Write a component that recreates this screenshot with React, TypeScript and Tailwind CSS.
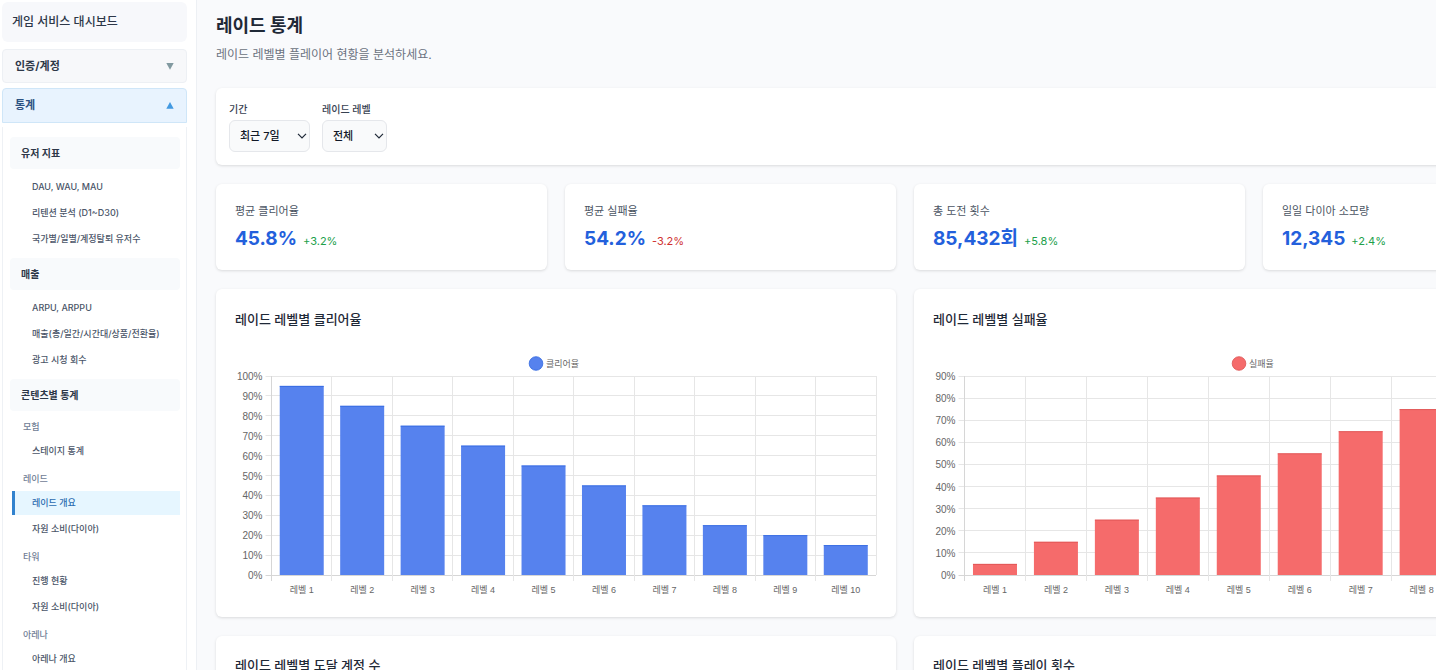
import { useState } from "react";
import clsx from "clsx";

type Item = { label: string; heading?: boolean; active?: boolean };
type Group = { title: string; items: Item[] };

const groups: Group[] = [
  {
    title: "유저 지표",
    items: [
      { label: "DAU, WAU, MAU" },
      { label: "리텐션 분석 (D1~D30)" },
      { label: "국가별/일별/계정탈퇴 유저수" },
    ],
  },
  {
    title: "매출",
    items: [
      { label: "ARPU, ARPPU" },
      { label: "매출(총/일간/시간대/상품/전환율)" },
      { label: "광고 시청 회수" },
    ],
  },
  {
    title: "콘텐츠별 통계",
    items: [
      { label: "모험", heading: true },
      { label: "스테이지 통계" },
      { label: "레이드", heading: true },
      { label: "레이드 개요", active: true },
      { label: "자원 소비(다이아)" },
      { label: "타워", heading: true },
      { label: "진행 현황" },
      { label: "자원 소비(다이아)" },
      { label: "아레나", heading: true },
      { label: "아레나 개요" },
    ],
  },
];

function Sidebar() {
  const [open, setOpen] = useState(true);
  return (
    <aside className="h-screen w-[197px] shrink-0 overflow-y-auto border-r border-[#edf0f4] bg-white py-[2px] pr-[9px] pl-[2px] [scrollbar-width:none]">
      <div className="flex h-10 items-center rounded-md bg-[#f7f8fb] px-[10px] text-[12px] font-medium text-[#2d3748]">
        게임 서비스 대시보드
      </div>
      <button
        type="button"
        className="mt-[7px] flex h-[34px] w-full items-center justify-between rounded border border-[#edf0f4] bg-[#f7f8fa] px-3 text-[11px] font-bold text-[#2d3748]"
      >
        인증/계정
        <svg className="h-[7px] w-[8px]" viewBox="0 0 8 7" aria-hidden="true">
          <path d="M0.3 0H7.7L4 6.8Z" fill="#829aa0" />
        </svg>
      </button>
      <button
        type="button"
        aria-expanded={open}
        onClick={() => setOpen(!open)}
        className="mt-[5px] flex h-[35px] w-full items-center justify-between rounded-t border border-[#cfe6f8] bg-[#e8f3fe] px-3 text-[11px] font-bold text-[#2c5282]"
      >
        통계
        <svg className="h-[7px] w-[8px]" viewBox="0 0 8 7" aria-hidden="true">
          <path d="M0.3 6.8H7.7L4 0Z" fill="#4299e1" />
        </svg>
      </button>
      {open && (
        <nav className="mt-1 flex flex-col gap-[7px] border-x border-[#eef1f5] px-[6px] pt-[10px] pb-4 pl-[7px]">
          {groups.map((g) => (
            <section key={g.title}>
              <h3 className="flex h-8 items-center rounded bg-[#f8fafc] px-[11px] text-[10px] font-bold text-[#2d3748]">
                {g.title}
              </h3>
              <ul className={clsx("flex flex-col gap-[2px] pl-[2px]", g.items[0].heading ? "pt-[2px]" : "pt-[6px]")}>
                {g.items.map((it, i) => (
                  <li key={i}>
                    {it.heading ? (
                      <div className="h-6 pt-1 pl-[11px] text-[9px] leading-5 font-medium text-[#718096]">
                        {it.label}
                      </div>
                    ) : (
                      <a
                        href="#"
                        className={clsx(
                          "block h-6 border-l-3 pl-[17px] text-[9px] leading-6 font-medium whitespace-nowrap",
                          it.active
                            ? "border-[#3182ce] bg-[#e6f6ff] text-[#2b6cb0]"
                            : "border-transparent text-[#4a5568]",
                        )}
                      >
                        {it.label}
                      </a>
                    )}
                  </li>
                ))}
              </ul>
            </section>
          ))}
        </nav>
      )}
    </aside>
  );
}

function Filter({ id, label, options }: { id: string; label: string; options: string[] }) {
  return (
    <div className="flex flex-col items-start gap-[3px]">
      <label htmlFor={id} className="text-[10px] leading-4 font-medium text-[#374151]">
        {label}
      </label>
      <div className="relative">
        <select
          id={id}
          className="h-8 min-w-[65px] appearance-none rounded-md border border-[#e5e7eb] bg-[#f9fafb] pr-[29px] pl-[10px] text-[11px] font-medium text-[#111827]"
        >
          {options.map((o) => (
            <option key={o}>{o}</option>
          ))}
        </select>
        <svg
          className="pointer-events-none absolute top-[13px] right-[3px] h-[6px] w-[10px]"
          viewBox="0 0 10 6"
          aria-hidden="true"
        >
          <path d="M1 0.8L5 4.8L9 0.8" fill="none" stroke="#1f2937" strokeWidth="1.2" />
        </svg>
      </div>
    </div>
  );
}

const kpis = [
  { label: "평균 클리어율", value: "45.8%", change: "+3.2%" },
  { label: "평균 실패율", value: "54.2%", change: "-3.2%" },
  { label: "총 도전 횟수", value: "85,432회", change: "+5.8%" },
  { label: "일일 다이아 소모량", value: "12,345", change: "+2.4%" },
];

type ChartProps = {
  label: string;
  values: number[];
  max: number;
  left: number;
  fill: string;
  stroke: string;
  legendX: number;
};

function BarChart({ label, values, max, left, fill, stroke, legendX }: ChartProps) {
  const right = 641;
  const top = 30;
  const bottom = 229;
  const step = (right - left) / values.length;
  const ticks = Array.from({ length: max / 10 + 1 }, (_, i) => i * 10);
  const y = (v: number) => bottom - ((bottom - top) * v) / max;
  const snap = (v: number) => Math.floor(v) + 0.5;
  return (
    <svg
      viewBox="0 0 642 252"
      className="block w-full font-['Liberation_Sans','Noto_Sans_CJK_KR',sans-serif]"
      role="img"
      aria-label={label}
    >
      <circle cx={legendX} cy="17.5" r="6.8" fill={fill} stroke={stroke} strokeWidth="0.8" />
      <text x={legendX + 10} y="20.5" fontSize="9" fill="#666">
        {label}
      </text>
      {ticks.map((t) => (
        <g key={t}>
          <line x1={left - 6} x2={right} y1={snap(y(t))} y2={snap(y(t))} stroke={t === 0 ? "#d6d6d6" : "#e6e6e6"} />
          <text x={left - 9} y={y(t) + 4} fontSize="10" fill="#666" textAnchor="end">
            {t}%
          </text>
        </g>
      ))}
      {[...values, 0].map((_, i) => (
        <line
          key={i}
          x1={snap(left + i * step)}
          x2={snap(left + i * step)}
          y1={top}
          y2={i === values.length ? bottom : bottom + 6}
          stroke={i === 0 ? "#d6d6d6" : "#e6e6e6"}
        />
      ))}
      {values.map((v, i) => (
        <g key={i}>
          <rect
            x={left + (i + 0.5) * step - 22}
            y={y(v)}
            width="44"
            height={bottom - y(v)}
            fill={fill}
          />
          <path
            d={`M${left + (i + 0.5) * step - 22} ${y(v) + 0.4}h44`}
            stroke={stroke}
            strokeWidth="0.8"
          />
          <text x={left + (i + 0.5) * step} y="247" fontSize="9" fill="#666" textAnchor="middle">
            {`레벨 ${i + 1}`}
          </text>
        </g>
      ))}
    </svg>
  );
}

const card = "rounded-md bg-white shadow-[0_1px_3px_rgba(0,0,0,0.13)]";

const charts: (ChartProps & { title: string })[] = [
  {
    title: "레이드 레벨별 클리어율",
    label: "클리어율",
    values: [95, 85, 75, 65, 55, 45, 35, 25, 20, 15],
    max: 100,
    left: 36.5,
    fill: "#5682ee",
    stroke: "#2f66df",
    legendX: 301,
  },
  {
    title: "레이드 레벨별 실패율",
    label: "실패율",
    values: [5, 15, 25, 35, 45, 55, 65, 75, 80, 85],
    max: 90,
    left: 31.5,
    fill: "#f56b6b",
    stroke: "#dc5050",
    legendX: 306,
  },
];

export default function App() {
  return (
    <div className="flex h-screen overflow-hidden bg-[#f9fafc] font-['Inter','Noto_Sans_CJK_KR',sans-serif]">
      <Sidebar />
      <main className="h-screen min-w-0 flex-1 overflow-auto pt-3 pl-[19px] [scrollbar-width:none]">
        <div className="flex min-w-[1378px] flex-col">
          <h1 className="text-[18px] leading-7 font-bold text-[#1f2937]">레이드 통계</h1>
          <p className="mt-[5px] text-[12px] leading-5 text-[#6b7280]">레이드 레벨별 플레이어 현황을 분석하세요.</p>

          <div className={`${card} mt-[23px] flex gap-3 p-[13px]`}>
            <Filter id="period" label="기간" options={["최근 7일"]} />
            <Filter id="level" label="레이드 레벨" options={["전체"]} />
          </div>

          <div className="mt-[19px] grid grid-cols-4 gap-[18px]">
            {kpis.map((k) => (
              <div key={k.label} className={`${card} h-[86px] px-[19px] pt-[19px]`}>
                <div className="text-[11px] leading-4 text-[#4b5563]">{k.label}</div>
                <div className="mt-[6px] flex items-baseline gap-[6px] leading-7">
                  <span className="text-[19px] font-bold text-[#2360dc]">{k.value}</span>
                  <span
                    className={clsx(
                      "text-[11px]",
                      k.change.startsWith("-") ? "text-[#cf3030]" : "text-[#21a04a]",
                    )}
                  >
                    {k.change}
                  </span>
                </div>
              </div>
            ))}
          </div>

          <div className="mt-[19px] grid grid-cols-2 gap-x-[18px] gap-y-[19px]">
            {charts.map(({ title, ...chart }) => (
              <section key={title} className={`${card} px-[19px] pt-5 pb-[19px]`}>
                <h2 className="mb-[17px] text-[13px] leading-5 font-medium text-[#1f2937]">{title}</h2>
                <BarChart {...chart} />
              </section>
            ))}
            {["레이드 레벨별 도달 계정 수", "레이드 레벨별 플레이 횟수"].map((title) => (
              <section key={title} className={`${card} min-h-40 px-[19px] pt-[19px] pb-[19px]`}>
                <h2 className="text-[13px] leading-5 font-medium text-[#1f2937]">{title}</h2>
              </section>
            ))}
          </div>
        </div>
      </main>
    </div>
  );
}
